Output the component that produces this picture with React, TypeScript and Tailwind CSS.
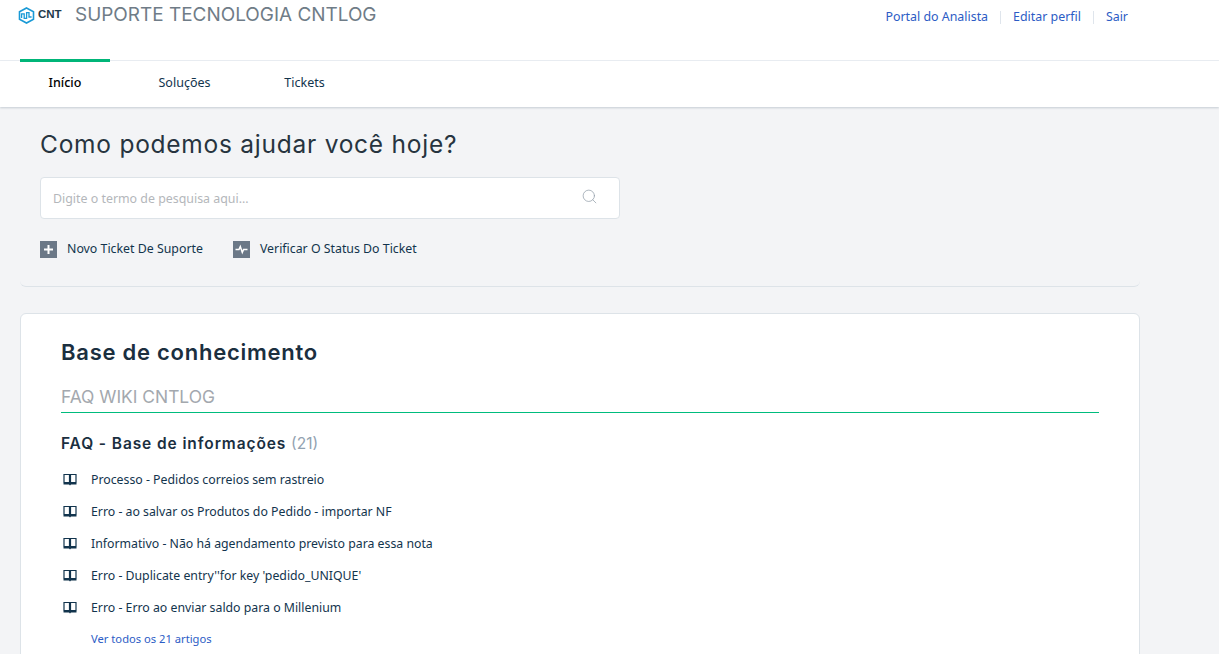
import { Search } from "lucide-react";

const articles = [
  "Processo - Pedidos correios sem rastreio",
  "Erro - ao salvar os Produtos do Pedido - importar NF",
  "Informativo - Não há agendamento previsto para essa nota",
  "Erro - Duplicate entry''for key 'pedido_UNIQUE'",
  "Erro - Erro ao enviar saldo para o Millenium",
];

function Logo() {
  return (
    <div className="flex items-center gap-[3px] w-[45px] shrink-0">
      <svg width="17" height="17" viewBox="0 0 17 17" fill="none" stroke="#1a9ad6" strokeWidth="1.6" className="shrink-0">
        <path d="M8.5 1 15.5 4.7V12.3L8.5 16 1.5 12.3V4.7Z" />
        <path d="M3.6 11V6.8H6.2V11.4H8.6V5.6H11V10H13.6" strokeWidth="1.3" />
      </svg>
      <div className="relative w-[25px] h-[10px]">
        <span className="block text-[10px] leading-[10px] font-bold scale-x-[1.15] origin-left text-[#1f3a4a] font-['Liberation_Sans',sans-serif]">
          CNT
        </span>
      </div>
    </div>
  );
}

function PlusIcon() {
  return (
    <svg width="11" height="11" viewBox="0 0 11 11" fill="white">
      <path d="M4.5 1H6.5V4.5H10V6.5H6.5V10H4.5V6.5H1V4.5H4.5Z" />
    </svg>
  );
}

function PulseIcon() {
  return (
    <svg width="13" height="13" viewBox="0 0 13 13" fill="none" stroke="white" strokeWidth="1.5">
      <path d="M0.5 6.5H4L5.3 3.5 7.3 9.5 8.6 6.5H12.5" />
    </svg>
  );
}

function BookIcon() {
  return (
    <svg width="14" height="13" viewBox="0 0 14 13" fill="none" className="shrink-0 -mt-[1px] text-[#12344d]">
      <path d="M1 1.5H6.5V9.5H1ZM7.5 1.5H13V9.5H7.5Z" stroke="currentColor" strokeWidth="1.2" />
      <path d="M0.5 10H13.5V11.5H8L7 12.5 6 11.5H0.5Z" fill="currentColor" />
    </svg>
  );
}

export default function App() {
  return (
    <div className="h-screen overflow-hidden bg-[#f3f4f6] font-['Noto_Sans',sans-serif] text-[#12344d]">
      {/* Top header */}
      <header className="h-[61px] bg-white border-b border-[#ebeff3] flex items-start pl-[18px] pr-[91px]">
        <div className="flex items-center gap-[12px] pt-[3px]">
          <Logo />
          <h1 className="font-['Inter',sans-serif] text-[18.95px] leading-[24px] text-[#6f7c87] whitespace-nowrap">
            SUPORTE TECNOLOGIA CNTLOG
          </h1>
        </div>
        <nav className="ml-auto flex items-center pt-[9px] text-[12.4px] leading-[16px] text-[#2c5cc5]">
          <a>Portal do Analista</a>
          <span className="mx-[12px] h-[13px] w-px bg-[#dfe5ec]" />
          <a>Editar perfil</a>
          <span className="mx-[12px] h-[13px] w-px bg-[#dfe5ec]" />
          <a>Sair</a>
        </nav>
      </header>

      {/* Tabs */}
      <nav className="relative h-[46px] pb-[2px] bg-white shadow-[0_1px_2px_rgba(18,52,77,0.2)] flex pl-[20px] text-[12.5px] text-[#12344d]">
        <a className="relative w-[90px] flex items-center justify-center font-medium text-black">
          <span className="absolute -top-[2px] left-0 right-0 h-[3px] bg-[#00b578]" />
          Início
        </a>
        <a className="w-[149px] flex items-center justify-center">Soluções</a>
        <a className="w-[91px] flex items-center justify-center">Tickets</a>
      </nav>

      {/* Search hero */}
      <section className="ml-[20px] w-[1120px] h-[180px] border-b border-[#dde3e8] rounded-b-[6px] pl-[20px] pt-[21px]">
        <h2 className="font-['Inter',sans-serif] text-[24.5px] leading-[32px] tracking-[0.75px] text-[#27343f]">
          Como podemos ajudar você hoje?
        </h2>
        <div className="mt-[17px] w-[580px] h-[42px] bg-white border border-[#dde3e8] rounded-[4px] flex items-center justify-between pl-[12px] pr-[21px]">
          <span className="pt-[2px] text-[12.4px] text-[#b4b7bb]">Digite o termo de pesquisa aqui...</span>
          <Search size={17} strokeWidth={1} className="text-[#8d9ba6] -mt-[3px]" />
        </div>
        <div className="mt-[21px] flex items-center gap-[30px] text-[12.35px] leading-[18px]">
          <a className="flex items-center gap-[10px]">
            <span className="w-[17px] h-[17px] bg-[#6b7887] flex items-center justify-center">
              <PlusIcon />
            </span>
            Novo Ticket De Suporte
          </a>
          <a className="flex items-center gap-[10px]">
            <span className="w-[17px] h-[17px] bg-[#6b7887] flex items-center justify-center">
              <PulseIcon />
            </span>
            Verificar O Status Do Ticket
          </a>
        </div>
      </section>

      {/* Knowledge base */}
      <section className="mt-[26px] ml-[20px] w-[1120px] bg-white border border-[#dde3e8] rounded-[6px] pl-[40px] pr-[40px] pt-[24px] pb-[20px]">
        <h2 className="font-['Inter',sans-serif] text-[22px] leading-[28px] tracking-[0.75px] font-semibold text-[#1b2f3f]">
          Base de conhecimento
        </h2>
        <div className="font-['Inter',sans-serif] mt-[18px] text-[17.4px] leading-[26px] text-[#a3a8ae]">
          FAQ WIKI CNTLOG
        </div>
        <div className="mt-[2px] h-[1px] bg-emerald-500" />
        <h3 className="font-['Inter',sans-serif] mt-[19px] text-[15.5px] leading-[24px] tracking-[0.9px] font-semibold text-[#1b2f3f]">
          FAQ - Base de informações <span className="font-normal tracking-normal text-[#92a2b1]">(21)</span>
        </h3>
        <ul className="mt-[8px] flex flex-col">
          {articles.map((title) => (
            <li key={title} className="h-[32px] flex items-center gap-[14px] pl-[2px] text-[12.3px]">
              <BookIcon />
              {title}
            </li>
          ))}
        </ul>
        <a className="block mt-[7px] pl-[30px] text-[11.2px] leading-[16px] text-[#2c5cc5]">Ver todos os 21 artigos</a>
      </section>
    </div>
  );
}
